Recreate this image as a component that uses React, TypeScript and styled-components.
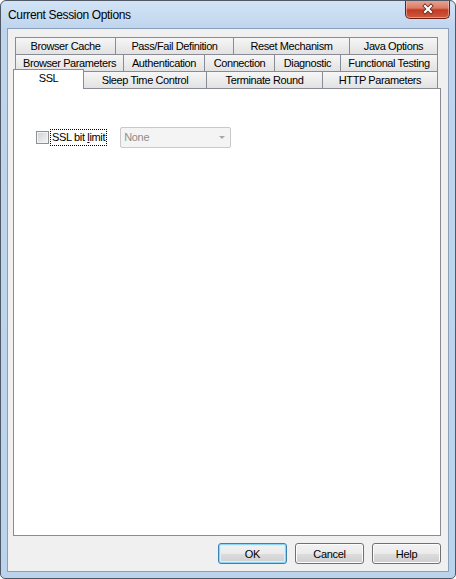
import React from "react";
import styled, { createGlobalStyle } from "styled-components";

const Global = createGlobalStyle`
  html, body { margin: 0; padding: 0; background: #ffffff; }
  body { font-family: "Liberation Sans", Arial, sans-serif; }
  * { box-sizing: border-box; }
`;

const Window = styled.div`
  width: 456px;
  height: 579px;
  border: 1px solid #4f5966;
  border-radius: 6px 6px 5px 5px;
  background: linear-gradient(180deg, #d2e3f5 0px, #bfd5ee 28px, #bcd3ed 100%);
  display: flex;
  flex-direction: column;
  overflow: hidden;
`;

const TitleBar = styled.div`
  height: 27px;
  display: flex;
  align-items: flex-start;
  justify-content: space-between;
  padding-left: 7px;
  padding-right: 5px;
`;

const TitleText = styled.div`
  font-family: "Liberation Sans", Arial, sans-serif;
  font-size: 12px;
  letter-spacing: -0.35px;
  color: #000;
  line-height: 14px;
  margin-top: 7px;
`;

const CloseButton = styled.div`
  width: 45px;
  height: 19px;
  margin-top: -1px;
  border: 1px solid #6b2015;
  border-top: none;
  border-radius: 0 0 5px 5px;
  background: linear-gradient(180deg, #e9a898 0%, #dc7a64 45%, #c23a22 55%, #cf5a3f 100%);
  box-shadow: inset 0 0 0 1px rgba(255, 210, 200, 0.5);
  display: flex;
  align-items: center;
  justify-content: center;
`;

const Client = styled.div`
  flex: 1;
  margin: 0 6px 6px 6px;
  border: 1px solid #8ba0bb;
  background: #f0f0f0;
  padding: 8px 7px 0 5px;
  display: flex;
  flex-direction: column;
`;

const TabRows = styled.div`
  display: flex;
  flex-direction: column;
  padding: 0 3px 0 2px;
`;

const TabRow = styled.div`
  display: flex;
  align-items: flex-end;
  height: 17px;
`;

const Tab = styled.div<{ $w: number; $selected?: boolean; $first?: boolean }>`
  width: ${(p) => p.$w}px;
  flex: none;
  height: ${(p) => (p.$selected ? 20 : 17)}px;
  margin-left: ${(p) => (p.$selected ? -2 : p.$first ? 0 : -1)}px;
  border: 1px solid #898c95;
  border-bottom: none;
  background: ${(p) =>
    p.$selected ? "#ffffff" : "linear-gradient(180deg, #f6f6f6 0%, #ececec 50%, #e2e2e2 100%)"};
  font-family: "Liberation Sans", Arial, sans-serif;
  font-size: 11px;
  letter-spacing: -0.4px;
  color: #000;
  display: flex;
  justify-content: center;
  align-items: flex-start;
  padding-top: 2px;
  line-height: 13px;
  white-space: nowrap;
  ${(p) => (p.$selected ? "position: relative; top: 1px; z-index: 1;" : "")}
`;

const Panel = styled.div`
  height: 448px;
  border: 1px solid #898c95;
  background: #ffffff;
  padding: 37px 0 0 22px;
`;

const OptionRow = styled.div`
  display: flex;
  align-items: center;
  height: 22px;
`;

const CheckBox = styled.div`
  width: 13px;
  height: 13px;
  border: 1px solid #8e8f8f;
  background: linear-gradient(135deg, #cfd1d4 0%, #e6e7e8 60%, #f5f5f5 100%);
  box-shadow: inset 0 0 0 1px #f4f4f4;
  margin-top: 1px;
`;

const Label = styled.span`
  margin-left: 1px;
  padding: 1px 1px 2px 1px;
  border: 1px dotted #000;
  font-family: "Liberation Sans", Arial, sans-serif;
  font-size: 11px;
  line-height: 12px;
  color: #000;
  letter-spacing: -0.35px;
`;

const Mnemonic = styled.span`
  text-decoration: underline;
`;

const Combo = styled.div`
  margin-left: 13px;
  width: 111px;
  height: 21px;
  border: 1px solid #c9c9c9;
  border-radius: 2px;
  background: #f4f4f4;
  display: flex;
  align-items: center;
  justify-content: space-between;
  padding: 0 5px 0 3px;
  font-family: "Liberation Sans", Arial, sans-serif;
  font-size: 11px;
  letter-spacing: -0.3px;
  color: #8d8d8d;
`;

const Arrow = styled.div`
  width: 0;
  height: 0;
  border-left: 3px solid transparent;
  border-right: 3px solid transparent;
  border-top: 3px solid #a8a8a8;
  margin-top: 1px;
`;

const ButtonRow = styled.div`
  display: flex;
  justify-content: flex-end;
  gap: 8px;
  margin-top: 7px;
`;

const Button = styled.div<{ $default?: boolean }>`
  width: 69px;
  height: 21px;
  border: 1px solid ${(p) => (p.$default ? "#3c7fb1" : "#707070")};
  border-radius: 3px;
  background: linear-gradient(180deg, #f2f2f2 0%, #ebebeb 50%, #dddddd 50%, #cfcfcf 100%);
  box-shadow: ${(p) => (p.$default ? "inset 0 0 0 1px #8fd5f5, inset 0 0 0 2px #d8effa" : "inset 0 0 0 1px #fcfcfc")};
  font-family: "Liberation Sans", Arial, sans-serif;
  font-size: 11px;
  letter-spacing: -0.3px;
  color: #000;
  display: flex;
  align-items: center;
  justify-content: center;
`;

const rows: { label: string; w: number; selected?: boolean }[][] = [
  [
    { label: "Browser Cache", w: 101 },
    { label: "Pass/Fail Definition", w: 119 },
    { label: "Reset Mechanism", w: 117 },
    { label: "Java Options", w: 89 },
  ],
  [
    { label: "Browser Parameters", w: 109 },
    { label: "Authentication", w: 82 },
    { label: "Connection", w: 71 },
    { label: "Diagnostic", w: 67 },
    { label: "Functional Testing", w: 98 },
  ],
  [
    { label: "SSL", w: 71, selected: true },
    { label: "Sleep Time Control", w: 124 },
    { label: "Terminate Round", w: 117 },
    { label: "HTTP Parameters", w: 116 },
  ],
];

export default function App() {
  return (
    <>
      <Global />
      <Window>
        <TitleBar>
          <TitleText>Current Session Options</TitleText>
          <CloseButton>
            <svg width="14" height="12" viewBox="0 0 14 12">
              <path d="M4 3 L10 9 M10 3 L4 9" stroke="#5a2a22" strokeWidth="3.8" strokeLinecap="square" />
              <path d="M4 3 L10 9 M10 3 L4 9" stroke="#ffffff" strokeWidth="2.2" strokeLinecap="square" />
            </svg>
          </CloseButton>
        </TitleBar>
        <Client>
          <TabRows>
            {rows.map((row, ri) => (
              <TabRow key={ri}>
                {row.map((t, ti) => (
                  <Tab key={t.label} $w={t.w} $selected={t.selected} $first={ti === 0}>
                    {t.label}
                  </Tab>
                ))}
              </TabRow>
            ))}
          </TabRows>
          <Panel>
            <OptionRow>
              <CheckBox />
              <Label>
                SSL bit <Mnemonic>l</Mnemonic>imit
              </Label>
              <Combo>
                <span>None</span>
                <Arrow />
              </Combo>
            </OptionRow>
          </Panel>
          <ButtonRow>
            <Button $default>OK</Button>
            <Button>Cancel</Button>
            <Button>Help</Button>
          </ButtonRow>
        </Client>
      </Window>
    </>
  );
}
